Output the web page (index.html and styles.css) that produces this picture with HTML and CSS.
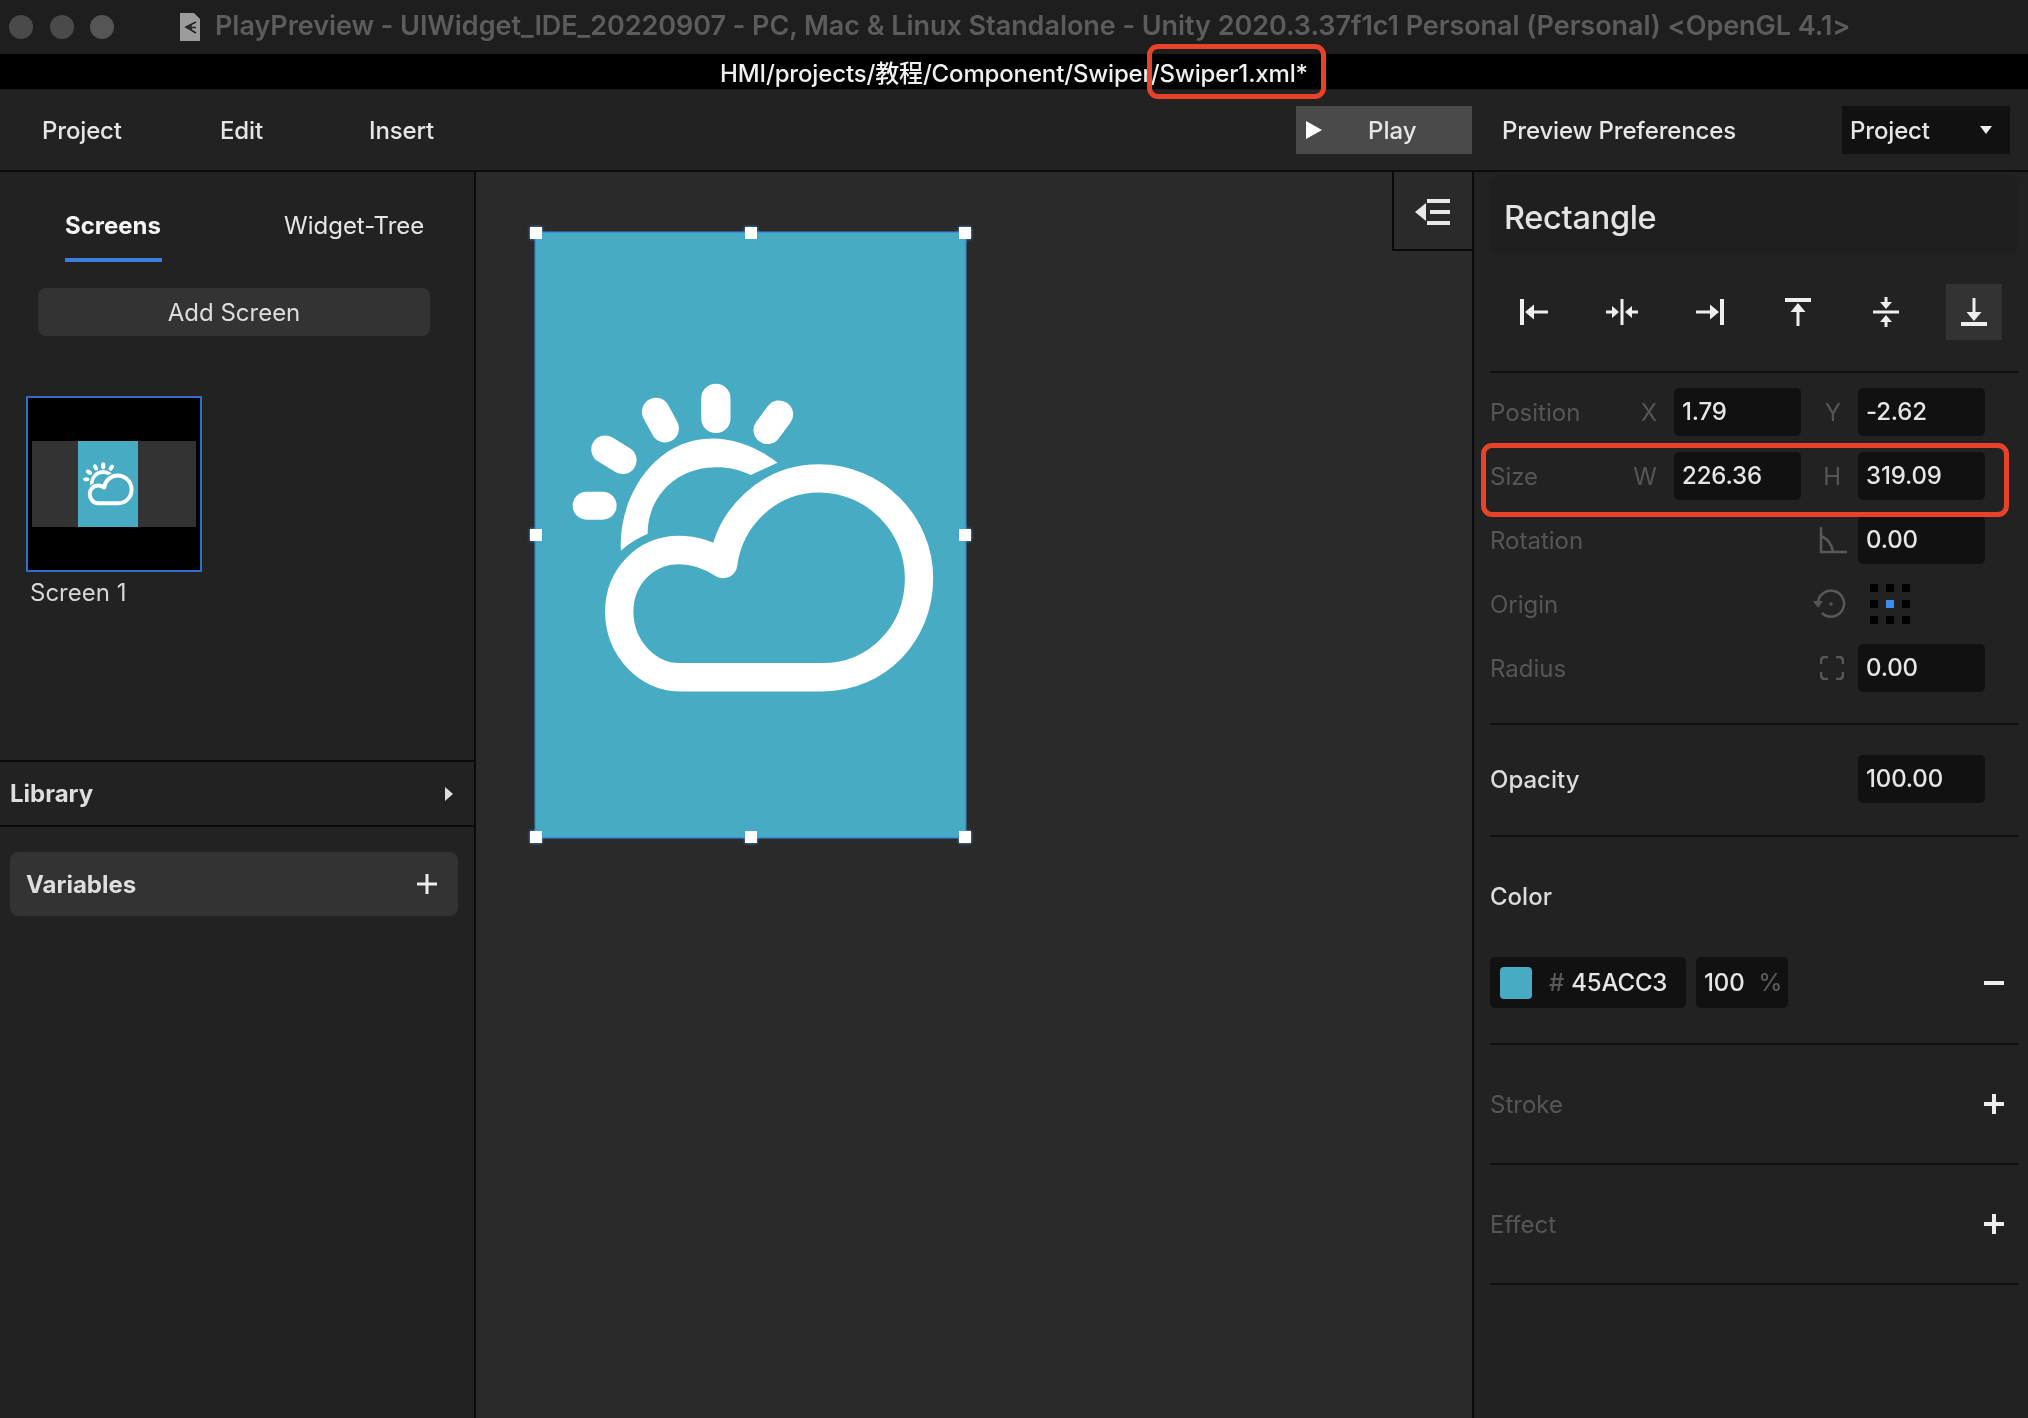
FILE: index.html
```html
<!DOCTYPE html>
<html lang="en">
<head>
<meta charset="utf-8">
<title>PlayPreview</title>
<link rel="stylesheet" href="styles.css">
</head>
<body>
<svg class="defs" width="0" height="0" aria-hidden="true">
  <symbol id="weather" viewBox="47 -321 1291 1815">
    <g fill="none" stroke="#fff" stroke-linecap="round" stroke-linejoin="round">
      <path stroke-width="88" d="M590 175V235"/>
      <path stroke-width="84" d="M410 215L437 265"/>
      <path stroke-width="84" d="M780 223L745 270"/>
      <path stroke-width="84" d="M258 328L310 360"/>
      <path stroke-width="84" d="M202 497H250"/>
      <path stroke-width="85" d="M612 672C570 645 525 630 480 630C375 630 300 715 300 815C300 925 385 1012 480 1012H910C1075 1012 1200 880 1200 715C1200 550 1065 415 900 415C750 415 630 530 612 672"/>
    </g>
    <path fill="#fff" d="M305 632C295 480 400 295 580 295C650 295 720 325 775 368L695 405C660 388 620 380 580 382C470 385 385 470 385 582Q340 600 305 632Z"/>
  </symbol>
</svg>

<header class="titlebar">
  <div class="lights"><span class="light"></span><span class="light"></span><span class="light light-last"></span></div>
  <svg class="docicon" width="20" height="28" viewBox="0 0 20 28">
    <path fill="#9c9c9c" d="M0 0H14L20 6V28H0Z"/>
    <path fill="none" stroke="#222" stroke-width="1.6" d="M16 9L6 14L16 20M11 11.5V17M6 14L16 14.5"/>
  </svg>
  <span class="title">PlayPreview - UIWidget_IDE_20220907 - PC, Mac &amp; Linux Standalone - Unity 2020.3.37f1c1 Personal (Personal) &lt;OpenGL 4.1&gt;</span>
</header>
<div class="pathbar"><span>HMI/projects/教程/Component/Swiper/Swiper1.xml*</span></div>

<nav class="toolbar">
  <span class="nav nav-project">Project</span>
  <span class="nav nav-edit">Edit</span>
  <span class="nav">Insert</span>
  <button class="play"><i class="play-tri"></i><span>Play</span></button>
  <span class="prefs">Preview Preferences</span>
  <div class="select"><span>Project</span><i class="select-tri"></i></div>
</nav>

<main class="workspace">
  <aside class="left">
    <div class="left-top">
      <div class="tabs">
        <span class="tab tab-active">Screens</span>
        <span class="tab">Widget-Tree</span>
      </div>
      <button class="add-screen">Add Screen</button>
      <div class="thumb">
        <div class="thumb-band">
          <div class="thumb-art"><svg width="60" height="85"><use href="#weather"/></svg></div>
        </div>
      </div>
      <div class="thumb-label">Screen 1</div>
    </div>
    <div class="library"><span>Library</span><i class="lib-tri"></i></div>
    <div class="variables">
      <span>Variables</span>
      <svg width="20" height="20" viewBox="0 0 20 20"><path class="plus" d="M10 0V20M0 10H20"/></svg>
    </div>
  </aside>

  <section class="canvas">
    <div class="artboard">
      <svg width="430" height="605"><use href="#weather"/></svg>
      <i class="handle h-tl"></i><i class="handle h-tc"></i><i class="handle h-tr"></i>
      <i class="handle h-ml"></i><i class="handle h-mr"></i>
      <i class="handle h-bl"></i><i class="handle h-bc"></i><i class="handle h-br"></i>
    </div>
    <button class="collapse">
      <svg width="36" height="26" viewBox="0 0 36 26">
        <path fill="#e8e8e8" d="M0 13L11 4V22Z"/>
        <path fill="none" stroke="#e8e8e8" stroke-width="4" d="M12 2H35M15 13H35M12 24H35"/>
      </svg>
    </button>
  </section>

  <aside class="right">
    <div class="obj-name">Rectangle</div>
    <div class="aligns">
      <div class="align"><svg width="36" height="36" viewBox="0 0 36 36"><path d="M4 5h4v26H4zM9 18l9-7.500v6h14v3H18v6z"/></svg></div>
      <div class="align"><svg width="36" height="36" viewBox="0 0 36 36"><path d="M16.500 5h3v26h-3zM15 18l-7-6v4.500H2v3h6V24zM21 18l7-6v4.500h6v3h-6V24z"/></svg></div>
      <div class="align"><svg width="36" height="36" viewBox="0 0 36 36"><path d="M28 5h4v26h-4zM27 18l-9-7.500v6H4v3h14v6z"/></svg></div>
      <div class="align"><svg width="36" height="36" viewBox="0 0 36 36"><path d="M5 4h26v4H5zM18 9l-7.500 9h6v14h3V18h6z"/></svg></div>
      <div class="align"><svg width="36" height="36" viewBox="0 0 36 36"><path d="M5 16.500h26v3H5zM18 15l-6-7h4.500V3h3v5H24zM18 21l-6 7h4.500v5h3v-5H24z"/></svg></div>
      <div class="align align-active"><svg width="36" height="36" viewBox="0 0 36 36"><path d="M5 28h26v4H5zM18 27l-7.500-9h6V4h3v14h6z"/></svg></div>
    </div>
    <hr class="rule">
    <div class="props">
      <div class="prop">
        <span class="lbl">Position</span><span class="axis">X</span><span class="input">1.79</span><span class="axis">Y</span><span class="input">-2.62</span>
      </div>
      <div class="prop">
        <span class="lbl">Size</span><span class="axis">W</span><span class="input">226.36</span><span class="axis">H</span><span class="input">319.09</span>
      </div>
      <div class="prop">
        <span class="lbl span3">Rotation</span>
        <span class="axis axis-icon">
          <svg width="28" height="28" viewBox="0 0 28 28"><path class="dim" d="M2 1V26H28M2 10C9 13 13 19 14 26"/></svg>
        </span>
        <span class="input">0.00</span>
      </div>
      <div class="prop">
        <span class="lbl span3">Origin</span>
        <span class="axis axis-icon">
          <svg width="34" height="30" viewBox="0 0 34 30"><path class="dim" d="M5 15A13 13 0 1 1 9 24"/><path fill="#555" d="M0 12H10L5 19Z"/><circle cx="18" cy="15" r="1.800" fill="#555"/></svg>
        </span>
        <div class="dots"><i></i><i></i><i></i><i></i><i class="dot-on"></i><i></i><i></i><i></i><i></i></div>
      </div>
      <div class="prop">
        <span class="lbl span3">Radius</span>
        <span class="axis axis-radius">
          <svg width="24" height="24" viewBox="0 0 24 24"><path class="dim" d="M1 8V5Q1 1 5 1H8M16 1H19Q23 1 23 5V8M23 16V19Q23 23 19 23H16M8 23H5Q1 23 1 19V16"/></svg>
        </span>
        <span class="input">0.00</span>
      </div>
    </div>
    <hr class="rule">
    <div class="prop opacity">
      <span class="lbl-on span3">Opacity</span><span></span><span class="input">100.00</span>
    </div>
    <hr class="rule">
    <div class="color">
      <div class="lbl-on color-title">Color</div>
      <div class="color-row">
        <div class="hexbox"><i class="swatch"></i><span class="hash">#</span><span>45ACC3</span></div>
        <div class="pctbox"><span>100</span><span class="hash">%</span></div>
        <svg class="minus" width="20" height="4" viewBox="0 0 20 4"><path class="plus" d="M0 2H20"/></svg>
      </div>
    </div>
    <hr class="rule">
    <div class="addrow"><span class="lbl">Stroke</span><svg width="20" height="20" viewBox="0 0 20 20"><path class="plus" d="M10 0V20M0 10H20"/></svg></div>
    <hr class="rule">
    <div class="addrow"><span class="lbl">Effect</span><svg width="20" height="20" viewBox="0 0 20 20"><path class="plus" d="M10 0V20M0 10H20"/></svg></div>
    <hr class="rule">
  </aside>
</main>

<div class="mark mark-file"></div>
<div class="mark mark-size"></div>
</body>
</html>
```
FILE: styles.css
```css
* { box-sizing: border-box; }
html, body { margin: 0; height: 100%; }
html { background: #222; }
body {
  position: relative;
  width: 2028px;
  height: 1418px;
  overflow: hidden;
  display: flex;
  flex-direction: column;
  background: #222;
  color: #e6e6e6;
  font-family: Inter, "Noto Sans CJK SC", sans-serif;
  font-size: 24px;
  filter: blur(0.6px);
}
.defs { position: absolute; }
button { font: inherit; color: inherit; border: 0; padding: 0; margin: 0; }
i { display: block; }

/* title */
.titlebar {
  height: 54px;
  flex: none;
  display: flex;
  align-items: center;
  background: #1e1e1e;
  padding-left: 9px;
}
.lights { display: flex; gap: 17px; width: 171px; }
.light { width: 24px; height: 24px; border-radius: 50%; background: #4a4a4a; }
.light-last { background: #555; margin-left: -1px; }
.docicon { flex: none; }
.title {
  margin: -4px 0 0 15px;
  font-size: 27px;
  font-weight: 600;
  letter-spacing: -0.05px;
  color: #5c5c5c;
  white-space: nowrap;
}
.pathbar {
  height: 36px;
  flex: none;
  background: #000;
  border-bottom: 1px solid #1a1a1a;
  display: flex;
  justify-content: center;
  color: #f0f0f0;
  font-size: 24px;
  font-weight: 500;
  letter-spacing: -0.15px;
  line-height: 39px;
}

/* toolbar */
.toolbar {
  height: 82px;
  flex: none;
  display: flex;
  align-items: center;
  padding: 0 18px 0 42px;
  background: #222;
  border-bottom: 2px solid #0c0c0c;
  font-weight: 500;
  letter-spacing: -0.15px;
}
.nav-project { width: 178px; }
.nav-edit { width: 149px; }
.play {
  margin-left: auto;
  width: 176px;
  height: 48px;
  background: #4a4a4a;
  display: flex;
  align-items: center;
  padding-left: 10px;
}
.play-tri {
  width: 0; height: 0;
  border-left: 16px solid #fff;
  border-top: 9px solid transparent;
  border-bottom: 9px solid transparent;
  margin-right: 46px;
}
.prefs { width: 370px; padding-left: 30px; }
.select {
  width: 168px;
  height: 48px;
  background: #111;
  display: flex;
  align-items: center;
  justify-content: space-between;
  padding: 0 18px 0 8px;
}
.select-tri {
  width: 0; height: 0;
  border-top: 8px solid #eee;
  border-left: 6px solid transparent;
  border-right: 6px solid transparent;
}

/* workspace */
.workspace {
  flex: 1;
  min-height: 0;
  display: grid;
  grid-template-columns: 474px 2px 996px 2px 1fr;
  background: #0a0a0a;
}
.left { grid-column: 1; background: #222; display: flex; flex-direction: column; }
.canvas { grid-column: 3; position: relative; background: #2a2a2a; padding: 62px 0 0 60px; }
.right { grid-column: 5; background: #222; padding: 3px 10px 0 16px; }

/* left */
.left-top { height: 588px; flex: none; }
.tabs { display: flex; padding-left: 65px; gap: 122px; }
.tab { padding-top: 39px; height: 90px; line-height: 30px; color: #e6e6e6; }
.tab-active {
  width: 97px;
  font-weight: 700;
  color: #f4f4f4;
  border-bottom: 4px solid #3b7fe0;
  white-space: nowrap;
}
.add-screen {
  display: block;
  width: 392px;
  height: 48px;
  margin: 26px 0 0 38px;
  background: #333;
  border-radius: 8px;
  color: #ddd;
}
.thumb {
  width: 176px;
  height: 176px;
  margin: 60px 0 0 26px;
  background: #000;
  border: 2px solid #2f6fc8;
  padding: 43px 4px 0;
}
.thumb-band { height: 86px; background: #333; padding-left: 46px; }
.thumb-art { width: 60px; height: 86px; background: #47abc3; }
.thumb-art svg { display: block; }
.thumb-label { margin: 6px 0 0 30px; line-height: 30px; color: #d6d6d6; }
.library {
  height: 67px;
  flex: none;
  border-top: 2px solid #0a0a0a;
  border-bottom: 2px solid #0a0a0a;
  padding: 0 21px 0 10px;
  display: flex;
  align-items: center;
  justify-content: space-between;
  font-weight: 700;
  color: #dedede;
}
.lib-tri {
  width: 0; height: 0;
  border-left: 8px solid #ddd;
  border-top: 7px solid transparent;
  border-bottom: 7px solid transparent;
}
.variables {
  height: 64px;
  margin: 25px 16px 0 10px;
  flex: none;
  background: #333;
  border-radius: 8px;
  padding: 0 21px 0 16px;
  display: flex;
  align-items: center;
  justify-content: space-between;
  font-weight: 700;
  color: #dedede;
}
.plus { fill: none; stroke: #eee; stroke-width: 4; }
.variables .plus { stroke-width: 3; }

/* canvas */
.artboard {
  position: relative;
  width: 429px;
  height: 604px;
  background: #47abc3;
  box-shadow: 0 0 0 1.5px #3a8ee0;
}
.artboard > svg { display: block; margin: -1px 0 0 -1px; }
.handle {
  position: absolute;
  width: 12px;
  height: 12px;
  background: #fff;
  box-shadow: 0 0 3px #4c9cf0;
  margin: -6px 0 0 -6px;
}
.h-tl { left: 0; top: 0; }
.h-tc { left: 50%; top: 0; }
.h-tr { left: 100%; top: 0; }
.h-ml { left: 0; top: 50%; }
.h-mr { left: 100%; top: 50%; }
.h-bl { left: 0; top: 100%; }
.h-bc { left: 50%; top: 100%; }
.h-br { left: 100%; top: 100%; }
.collapse {
  position: absolute;
  top: 0;
  right: 0;
  width: 80px;
  height: 79px;
  background: #2a2a2a;
  border-left: 2px solid #0a0a0a;
  border-bottom: 2px solid #0a0a0a;
  display: flex;
  align-items: flex-start;
  justify-content: center;
  padding-top: 27px;
}

/* right */
.obj-name {
  height: 80px;
  background: #1f1f1f;
  border-radius: 10px;
  padding-left: 14px;
  line-height: 85px;
  font-size: 32.500px;
  font-weight: 500;
  letter-spacing: -0.3px;
  color: #e4e4e4;
}
.aligns { display: flex; gap: 32px; padding-left: 16px; margin-top: 29px; }
.align { width: 56px; height: 56px; display: flex; align-items: center; justify-content: center; }
.align path { fill: #eee; }
.align-active { background: #333; }
.rule { height: 2px; margin: 31px 0 0; border: 0; background: #0e0e0e; }
.props { display: flex; flex-direction: column; gap: 16px; margin-top: 15px; }
.prop {
  display: grid;
  grid-template-columns: 140px 44px 127px 57px 127px;
  height: 48px;
  align-items: center;
}
.lbl { color: #565656; }
.lbl-on { color: #dcdcdc; font-weight: 500; }
.span3 { grid-column: span 3; }
.axis { color: #565656; text-align: right; padding-right: 17px; display: flex; justify-content: flex-end; align-items: center; }
.axis-icon { padding-right: 11px; }
.axis-radius { padding-right: 14px; }
.input {
  height: 48px;
  line-height: 47px;
  background: #111;
  border-radius: 5px;
  padding-left: 8px;
  color: #e6e6e6;
  font-weight: 500;
  letter-spacing: -0.15px;
}
.dim { fill: none; stroke: #585858; stroke-width: 2.500; }
.dots {
  display: grid;
  grid-template-columns: repeat(3, 8px);
  gap: 8px;
  margin-left: 12px;
}
.dots i { width: 8px; height: 8px; background: #000; }
.dots .dot-on { background: #3b8df0; }
.opacity { margin-top: 30px; }
.opacity + .rule { margin-top: 32px; }
.color { height: 206px; padding-top: 40px; }
.color-title { height: 40px; line-height: 40px; }
.color-row { display: flex; align-items: center; margin-top: 40px; gap: 10px; height: 51px; }
.hexbox, .pctbox {
  height: 51px;
  background: #111;
  border-radius: 5px;
  display: flex;
  align-items: center;
  color: #e6e6e6;
  font-weight: 500;
  letter-spacing: -0.15px;
}
.hexbox { width: 196px; padding-left: 10px; }
.pctbox { width: 92px; padding-left: 8px; }
.swatch { width: 32px; height: 32px; border-radius: 4px; background: #47abc3; margin-right: 17px; }
.hash { color: #5a5a5a; margin-right: 7px; }
.pctbox .hash { margin: 0 0 0 14px; }
.minus { margin-left: auto; margin-right: 14px; }
.color + .rule { margin-top: 0; }
.addrow {
  height: 118px;
  display: flex;
  align-items: center;
  justify-content: space-between;
  padding-right: 14px;
}
.addrow + .rule { margin-top: 0; }

/* annotation boxes */
.mark {
  position: absolute;
  border: 5px solid #e8432a;
  border-radius: 11px;
  pointer-events: none;
}
.mark-file { left: 1147px; top: 44px; width: 179px; height: 55px; }
.mark-size { left: 1481px; top: 443px; width: 528px; height: 74px; }
```
